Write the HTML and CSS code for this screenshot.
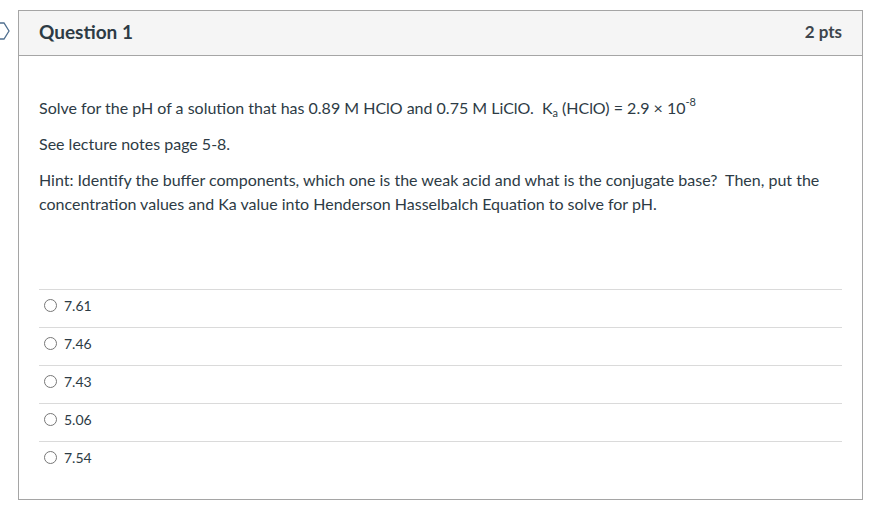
FILE: index.html
```html
<!DOCTYPE html>
<html>
<head>
<meta charset="utf-8">
<link rel="stylesheet" href="styles.css">
</head>
<body>
<div class="page">
  <svg class="marker" width="12" height="20" viewBox="0 0 12 20"><path d="M-4 2 L4 2 L9 10 L4 18 L-4 18" fill="none" stroke="#4f6f8f" stroke-width="1.3"/></svg>
  <div class="card">
    <div class="header">
      <span class="title">Question 1</span>
      <span class="pts">2 pts</span>
    </div>
    <div class="body">
      <p>Solve for the pH of a solution that has 0.89 M HClO and 0.75 M LiClO.&nbsp; K<sub>a</sub> (HClO) = 2.9 × 10<sup>-8</sup></p>
      <p>See lecture notes page 5-8.</p>
      <p>Hint: Identify the buffer components, which one is the weak acid and what is the conjugate base?&nbsp; Then, put the concentration values and Ka value into Henderson Hasselbalch Equation to solve for pH.</p>
    </div>
    <div class="answers">
      <div class="answer"><span class="radio"></span><span>7.61</span></div>
      <div class="answer"><span class="radio"></span><span>7.46</span></div>
      <div class="answer"><span class="radio"></span><span>7.43</span></div>
      <div class="answer"><span class="radio"></span><span>5.06</span></div>
      <div class="answer"><span class="radio"></span><span>7.54</span></div>
    </div>
  </div>
</div>
</body>
</html>
```
FILE: styles.css
```css
html, body { margin: 0; padding: 0; background: #fff; }
body { font-family: Lato, "Open Sans", sans-serif; color: #2d3b45; }
.page { position: relative; padding: 10px 12px 0 18px; }
.marker { position: absolute; left: 0; top: 21px; }
.card { width: 843px; border: 1px solid #a5a5a5; }
.header {
  background: #f5f5f5; border-bottom: 1px solid #a5a5a5;
  display: flex; align-items: center; justify-content: space-between;
  padding: 0 20px 3px 20px; box-sizing: border-box; height: 45px;
}
.title { font-weight: 700; font-size: 19px; }
.pts { font-weight: 700; font-size: 17px; color: #3d454c; }
.body { padding: 28px 20px 0 20px; font-size: 16px; line-height: 24px; }
.body p { margin: 12px 0; }
.body sub { font-size: 11px; vertical-align: -3px; line-height: 0; }
.body sup { font-size: 11px; vertical-align: 8px; line-height: 0; }
.answers { margin: 73px 20px 20px 20px; }
.answer {
  height: 37px; border-top: 1px solid #dadada; box-sizing: content-box;
  display: flex; align-items: flex-start; font-size: 14px; line-height: 17px;
}
.answer > span:last-child { margin-top: 7px; }
.radio {
  width: 11px; height: 11px; border: 1px solid #777; border-radius: 50%;
  margin: 9px 7px 0 5px; box-sizing: content-box;
}
```
